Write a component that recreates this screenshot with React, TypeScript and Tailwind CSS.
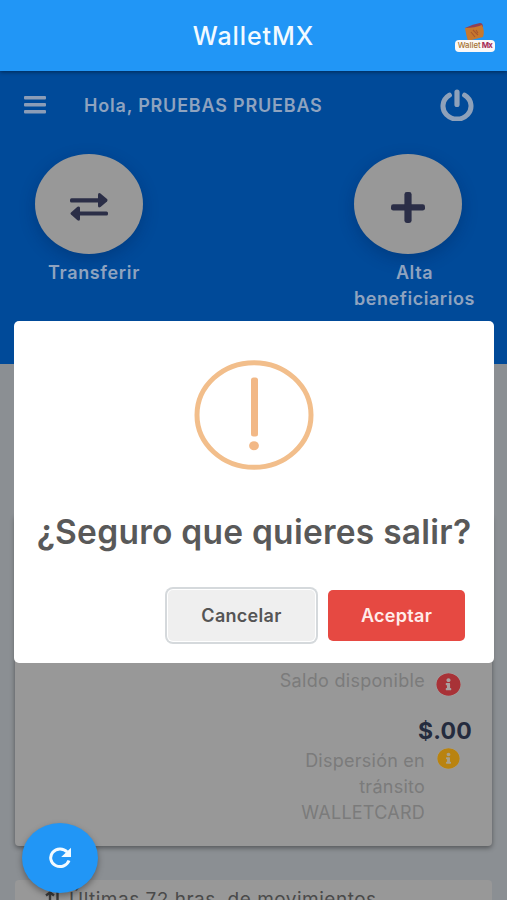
import React from "react";
import { FaInfoCircle } from "react-icons/fa";

const WalletLogo = () => (
    <div className="flex w-[40px] flex-col items-center">
        <svg width="22" height="18" viewBox="0 0 22 18">
            <path d="M1 5 Q9 1 16 0 Q19 0 19 4 L4 8 Z" fill="#8d4058" />
            <path d="M1 5 Q11 5 18 2 Q21 8 19 14 Q11 16 4 18 Q2 12 1 5 Z" fill="#c7782e" />
            <path d="M7 9 L11 14 M9 7 L14 12 M12 7 L14 10" stroke="#a9562f" strokeWidth="1.1" />
        </svg>
        <div className="-mt-[1px] flex h-[12px] w-[40px] items-center justify-center gap-[1px] rounded-[4px] bg-[#fbf8f7] text-[7.8px] leading-none">
            <span className="font-medium tracking-[0px] text-[#a5712f]">Wallet</span>
            <span className="font-bold tracking-[-0.6px] text-[#a52a55]">Mx</span>
        </div>
    </div>
);

const MenuIcon = () => (
    <svg width="22" height="18" viewBox="0 0 22 18" fill="#8c9db7">
        <rect x="0" y="0" width="22" height="3.4" rx="1" />
        <rect x="0" y="7" width="22" height="3.4" rx="1" />
        <rect x="0" y="14" width="22" height="3.4" rx="1" />
    </svg>
);

const PowerIcon = () => (
    <svg width="34" height="32" viewBox="0 0 34 32" fill="none" stroke="#8ea1ba" strokeLinecap="round">
        <path d="M9.4 6.2 A14 13 0 1 0 24.6 6.2" strokeWidth="5" />
        <path d="M17 3 V15.5" strokeWidth="5.2" />
    </svg>
);

const TransferIcon = () => (
    <svg width="38" height="28" viewBox="0 0 38 28" fill="#2b2e47">
        <rect x="0" y="5.2" width="30" height="4.2" rx="1.5" />
        <path d="M28 2 Q28 -0.7 30.5 0.4 L37 6.1 Q38 7.3 37 8.4 L30.5 14 Q28 15.2 28 12.8 Z" />
        <rect x="8" y="18.4" width="30" height="4.2" rx="1.5" />
        <path d="M10 15 Q10 12.6 7.5 13.8 L1 19.4 Q0 20.5 1 21.6 L7.5 27.3 Q10 28.4 10 26 Z" />
    </svg>
);

const PlusIcon = () => (
    <svg width="34" height="31" viewBox="0 0 34 31" fill="#2b2e47">
        <rect x="0" y="12.2" width="34" height="6.4" rx="2.4" />
        <rect x="13.4" y="0" width="7.2" height="31" rx="2.4" />
    </svg>
);

const RefreshIcon = () => (
    <svg width="24" height="22" viewBox="0 0 24 22">
        <path d="M19.2 5 A9.4 8.8 0 1 0 21 13.6" fill="none" stroke="#f2faff" strokeWidth="3" />
        <path d="M23 0.8 V10 H13.2 Z" fill="#f2faff" />
    </svg>
);

const WarningIcon = () => (
    <svg width="120" height="110" viewBox="0 0 120 110">
        <ellipse cx="60" cy="55" rx="57" ry="52.3" fill="none" stroke="#f2be8b" strokeWidth="5" />
        <rect x="57" y="17.5" width="7" height="59" rx="2.5" fill="#f2b886" />
        <ellipse cx="60" cy="85.7" rx="4.9" ry="4.5" fill="#f2b886" />
    </svg>
);

export default function App() {
    return (
        <div className="relative flex h-[900px] w-[507px] flex-col overflow-hidden bg-[#8b8f93] font-['Inter',sans-serif]">
            {/* App bar */}
            <header className="z-10 grid h-[71px] shrink-0 grid-cols-[1fr_auto_1fr] items-center bg-[#2196f6] pl-[12px] pr-[12px] shadow-[0_1px_4px_rgba(0,0,0,0.45)]">
                <span />
                <h1 className="pt-[3px] text-[25px] font-medium tracking-[0.9px] text-[#f2faff]">WalletMX</h1>
                <div className="justify-self-end pt-[3px]">
                    <WalletLogo />
                </div>
            </header>

            {/* Greeting and shortcuts */}
            <section className="h-[293px] shrink-0 bg-[#004a99] text-[#8fa3bf]">
                <div className="flex h-[68px] items-center pl-[24px] pr-[33px]">
                    <MenuIcon />
                    <p className="ml-[38px] pt-[1px] text-[18px] font-semibold tracking-[0.8px] whitespace-nowrap">
                        Hola, PRUEBAS PRUEBAS
                    </p>
                    <span className="ml-auto">
                        <PowerIcon />
                    </span>
                </div>

                <div className="flex justify-between pt-[15px] pl-[35px] pr-[32px]">
                    <div className="flex w-[118px] flex-col">
                        <div className="flex h-[100px] w-[108px] items-center justify-center rounded-[50%] bg-[#989898] pt-[6px] shadow-[0_5px_16px_rgba(0,20,60,0.25)]">
                            <TransferIcon />
                        </div>
                        <p className="mt-[6px] text-center text-[18px] leading-[26px] font-semibold tracking-[0.65px]">Transferir</p>
                    </div>
                    <div className="flex w-[121px] flex-col">
                        <div className="flex h-[100px] w-[108px] items-center justify-center rounded-[50%] bg-[#989898] pt-[6px] shadow-[0_5px_16px_rgba(0,20,60,0.25)]">
                            <PlusIcon />
                        </div>
                        <p className="mt-[6px] text-center text-[18px] leading-[26px] font-semibold tracking-[0.55px]">
                            Alta beneficiarios
                        </p>
                    </div>
                </div>
            </section>

            {/* Balance */}
            <section className="mx-[15px] mt-[151px] flex h-[331px] shrink-0 flex-col rounded-[4px] bg-[#989898] pt-[152px] shadow-[0_2px_5px_rgba(0,0,0,0.4)]">
                <div className="flex justify-end pr-[31px] text-[#7b7b7b]">
                    <p className="text-[18px] leading-[28px] tracking-[0.3px]">Saldo disponible</p>
                    <span className="mt-[6px] ml-[11px] flex h-[23px] w-[25px]">
                        <FaInfoCircle className="h-full w-full rounded-[50%] bg-[#aaa0a0] text-[#a83237]" preserveAspectRatio="none" />
                    </span>
                </div>
                <p className="mt-[21px] pr-[20px] text-right text-[23px] leading-[28px] font-bold tracking-[0.2px] text-[#242b3e]">$.00</p>
                <div className="mt-[2px] flex justify-end pr-[32px] text-[#7b7b7b]">
                    <p className="w-[140px] pt-[1px] text-right text-[18px] leading-[26px] tracking-[0.25px]">
                        Dispersión en tránsito WALLETCARD
                    </p>
                    <span className="mt-[1px] ml-[12px] flex h-[21px] w-[23px]">
                        <FaInfoCircle className="h-full w-full rounded-[50%] bg-[#a8a08c] text-[#b98310]" preserveAspectRatio="none" />
                    </span>
                </div>
            </section>

            {/* Movements */}
            <section className="mx-[15px] mt-[34px] flex h-[60px] shrink-0 rounded-[4px] bg-[#989898] pt-[6px] pl-[30px] text-[#4a4a4a]">
                <svg width="16" height="20" viewBox="0 0 16 20" fill="none" stroke="#3c3c3c" strokeWidth="2.4" className="mt-[5px]">
                    <path d="M5 18 V2 M1 4.5 L5 1.5 L9 4.5 M12.5 1 V17 M9 14 L12.5 17.5 L16 14" />
                </svg>
                <p className="ml-[8px] text-[19px] leading-[28px] tracking-[0.5px]">Últimas 72 hras. de movimientos</p>
            </section>

            {/* Refresh button */}
            <button className="absolute top-[823px] left-[22px] flex h-[70px] w-[76px] items-center justify-center rounded-[50%] bg-[#2196f6] shadow-[0_3px_6px_rgba(0,0,0,0.35)]">
                <RefreshIcon />
            </button>

            {/* Logout dialog */}
            <div className="absolute top-[321px] left-[14px] z-20 flex h-[342px] w-[480px] flex-col items-center rounded-[5px] bg-white pt-[39px]">
                <WarningIcon />
                <h2 className="mt-[42px] text-[33.5px] leading-[40px] font-semibold tracking-[0.25px] whitespace-nowrap text-[#595959]">
                    ¿Seguro que quieres salir?
                </h2>
                <div className="mt-[38px] flex w-full justify-end gap-[13px] pr-[29px]">
                    <button className="h-[51px] w-[147px] rounded-[5px] bg-[#efefef] text-[18px] font-semibold tracking-[0.3px] text-[#555] shadow-[0_0_0_1px_#fff,0_0_0_3px_#d5d9dc]">
                        Cancelar
                    </button>
                    <button className="h-[51px] w-[137px] rounded-[5px] bg-[#e64942] text-[18px] font-semibold tracking-[0.3px] text-[#ffecea]">
                        Aceptar
                    </button>
                </div>
            </div>
        </div>
    );
}
